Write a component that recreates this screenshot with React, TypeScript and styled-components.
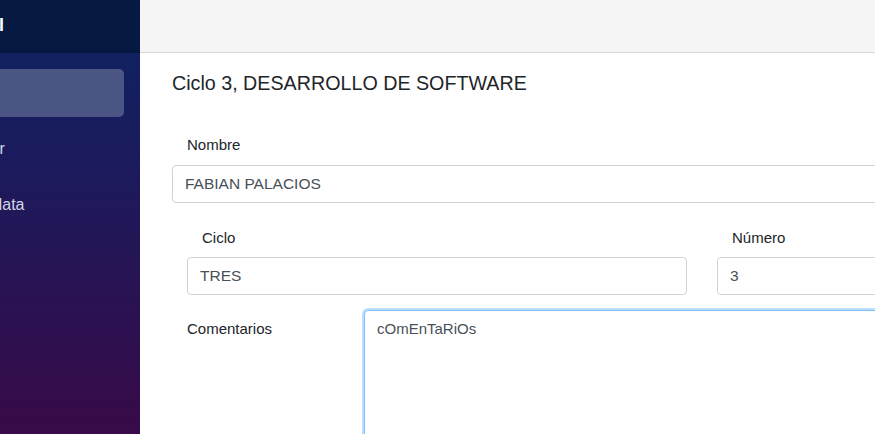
import React, { useEffect, useRef } from "react";
import styled, { createGlobalStyle } from "styled-components";

const Global = createGlobalStyle`
  html, body { margin: 0; padding: 0; overflow: hidden; background: #fff; }
  body { font-family: "Liberation Sans", Arial, sans-serif; }
  * { box-sizing: border-box; }
`;

const Shell = styled.div`
  display: flex;
  width: 875px;
  height: 434px;
  overflow: hidden;
`;

const Sidebar = styled.aside`
  flex: 0 0 140px;
  width: 140px;
  height: 434px;
  overflow: hidden;
  display: flex;
  flex-direction: column;
  background: linear-gradient(180deg, #0c2462 0%, #1c1a5c 40%, #380a48 100%);
`;

const SidebarInner = styled.div`
  width: 260px;
  margin-left: -120px;
  display: flex;
  flex-direction: column;
`;

const Brand = styled.div`
  height: 53px;
  background: #061a41;
  display: flex;
  align-items: flex-start;
  justify-content: flex-end;
  padding: 13px 136px 0 0;
  color: #ffffff;
  font-weight: 700;
  font-size: 18px;
  line-height: 24px;
`;

const Nav = styled.nav`
  display: flex;
  flex-direction: column;
  gap: 8px;
  padding: 16px 16px 0 0;
`;

const NavItem = styled.a<{ $active?: boolean }>`
  height: 48px;
  display: flex;
  align-items: center;
  padding-left: 60px;
  border-radius: 5px;
  font-size: 16px;
  color: #d3d5e8;
  text-decoration: none;
  background: ${(p) => (p.$active ? "#4a5583" : "transparent")};
`;

const Main = styled.main`
  flex: 1 1 auto;
  min-width: 0;
  display: flex;
  flex-direction: column;
  overflow: hidden;
`;

const TopBar = styled.header`
  height: 53px;
  flex: 0 0 53px;
  background: #f5f5f5;
  border-bottom: 1px solid #d8d8d8;
`;

const Content = styled.section`
  padding: 18px 0 0 32px;
`;

const Title = styled.h1`
  margin: 0;
  font-size: 19.7px;
  line-height: 24px;
  font-weight: 400;
  color: #212529;
`;

const Form = styled.form`
  width: 1060px;
  margin-top: 39px;
  display: flex;
  flex-direction: column;
`;

const Group = styled.div<{ $gap?: number }>`
  display: flex;
  flex-direction: column;
  gap: 8px;
  margin-top: ${(p) => p.$gap ?? 0}px;
`;

const Label = styled.label`
  padding-left: 15px;
  font-size: 15px;
  line-height: 22.5px;
  color: #212529;
`;

const Input = styled.input`
  width: 100%;
  height: 38px;
  padding: 0 12px;
  border: 1px solid #ced4da;
  border-radius: 4px;
  font-family: "Liberation Sans", Arial, sans-serif;
  font-size: 15.5px;
  color: #495057;
  background: #fff;
  outline: none;
`;

const Row = styled.div<{ $gap?: number }>`
  display: flex;
  margin-top: ${(p) => p.$gap ?? 0}px;
`;

const Col = styled.div<{ $w: number }>`
  flex: 0 0 ${(p) => p.$w}px;
  width: ${(p) => p.$w}px;
  padding: 0 15px;
  display: flex;
  flex-direction: column;
  gap: 8px;
`;

const SideLabel = styled.label`
  flex: 0 0 177px;
  padding: 8px 0 0 15px;
  font-size: 15px;
  line-height: 22.5px;
  color: #212529;
`;

const TextCol = styled.div`
  flex: 1 1 auto;
  padding-left: 15px;
`;

const TextArea = styled.textarea`
  display: block;
  width: 100%;
  height: 160px;
  padding: 7px 12px;
  border: 1px solid #80bdff;
  border-radius: 4px;
  box-shadow: 0 0 0 2px rgba(0, 123, 255, 0.25);
  font-family: "Liberation Sans", Arial, sans-serif;
  font-size: 15px;
  line-height: 22.5px;
  color: #495057;
  resize: none;
  outline: none;
`;

export default function App() {
  const ref = useRef<HTMLTextAreaElement>(null);
  useEffect(() => {
    const el = ref.current;
    if (el) {
      el.focus();
      el.setSelectionRange(el.value.length, el.value.length);
    }
  }, []);
  return (
    <>
      <Global />
      <Shell>
        <Sidebar>
          <SidebarInner>
            <Brand>Panel</Brand>
            <Nav>
              <NavItem $active>Inicio</NavItem>
              <NavItem>Registrar</NavItem>
              <NavItem>Cargar data</NavItem>
            </Nav>
          </SidebarInner>
        </Sidebar>
        <Main>
          <TopBar />
          <Content>
            <Title>Ciclo 3, DESARROLLO DE SOFTWARE</Title>
            <Form onSubmit={(e) => e.preventDefault()}>
              <Group>
                <Label>Nombre</Label>
                <Input defaultValue="FABIAN PALACIOS" />
              </Group>
              <Row $gap={24}>
                <Col $w={530}>
                  <Label>Ciclo</Label>
                  <Input defaultValue="TRES" />
                </Col>
                <Col $w={530}>
                  <Label>Número</Label>
                  <Input defaultValue="3" />
                </Col>
              </Row>
              <Row $gap={15}>
                <SideLabel>Comentarios</SideLabel>
                <TextCol>
                  <TextArea ref={ref} defaultValue="cOmEnTaRiOs" />
                </TextCol>
              </Row>
            </Form>
          </Content>
        </Main>
      </Shell>
    </>
  );
}
